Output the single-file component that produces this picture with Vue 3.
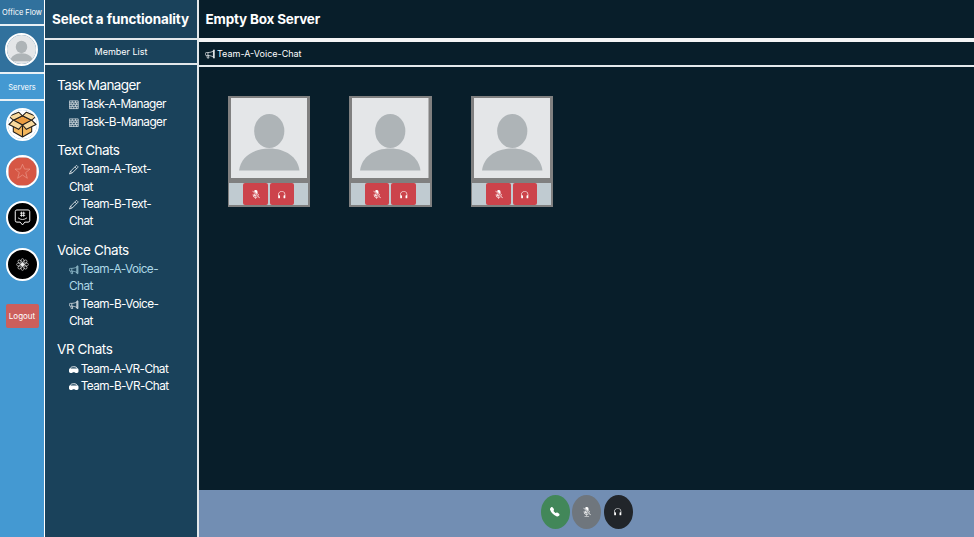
<script setup>
import { h } from 'vue'

const shapes = {
  bricks: [['path', { d: 'M.5 1.500h15v13H.500zM.500 4.750h15M.500 8h15M.500 11.250h15M5.500 1.500v3.250M11 1.500v3.250M3.500 4.750V8M8 4.750V8M12.500 4.750V8M5.500 8v3.250M11 8v3.250M3.500 11.250v3.250M8 11.250v3.250M12.500 11.250v3.250', fill: 'none', stroke: 'currentColor', 'stroke-width': 1.1 }]],
  pencil: [['path', { d: 'M12.2.9a.7.7 0 0 1 1 0l1.9 1.9a.7.7 0 0 1 0 1L5.6 13.3.8 15.2l1.9-4.800zM9.800 3.300l2.900 2.900M2.700 10.400l2.900 2.900', fill: 'none', stroke: 'currentColor', 'stroke-width': 1.25 }]],
  megaphone: [['path', { d: 'M13.500 2.300v11.400M13.500 1.500h1.600v13h-1.600zM13.300 3.200C11 4.900 7.400 5.600 4.500 5.700H2.200C1.200 5.700.6 6.300.6 7v2c0 .8.6 1.300 1.600 1.300h2.300c2.900.1 6.500.8 8.800 2.500M4.700 5.700v4.600M3 10.400l.8 4.100h2.500l-.8-4', fill: 'none', stroke: 'currentColor', 'stroke-width': 1.1 }]],
  vr: [
    ['path', { d: 'M2 6.500C2.300 4 4.800 2.900 8 2.900s5.700 1.100 6 3.600', fill: 'none', stroke: 'currentColor', 'stroke-width': 1.5 }],
    ['path', { d: 'M2 5.800h12a2 2 0 0 1 2 2v3a2.500 2.500 0 0 1-2.500 2.500h-2c-1.500 0-2-1-3.500-1s-2 1-3.500 1h-2A2.500 2.500 0 0 1 0 10.800v-3a2 2 0 0 1 2-2z', fill: 'currentColor' }]
  ],
  mute: [['path', { d: 'M13 8c0 .564-.094 1.107-.266 1.613l-.814-.814A4 4 0 0 0 12 8V7a.5.5 0 0 1 1 0zm-5 4c.818 0 1.578-.245 2.212-.667l.718.719a5 5 0 0 1-2.43.923V15h3a.5.5 0 0 1 0 1h-7a.5.5 0 0 1 0-1h3v-2.025A5 5 0 0 1 3 8V7a.5.5 0 0 1 1 0v1a4 4 0 0 0 4 4m3-9v4.879L5.158 2.037A3.001 3.001 0 0 1 11 3M9.486 10.607 5 6.12V8a3 3 0 0 0 4.486 2.607M2.146 1.854l12 12 .708-.708-12-12z', fill: 'currentColor' }]],
  headphones: [['path', { d: 'M8 3a5 5 0 0 0-5 5v1h1a1 1 0 0 1 1 1v3a1 1 0 0 1-1 1H3a1 1 0 0 1-1-1V8a6 6 0 1 1 12 0v5a1 1 0 0 1-1 1h-1a1 1 0 0 1-1-1v-3a1 1 0 0 1 1-1h1V8a5 5 0 0 0-5-5', fill: 'currentColor' }]],
  phone: [['path', { d: 'M1.885.511a1.745 1.745 0 0 1 2.61.163L6.29 2.98c.329.423.445.974.315 1.494l-.547 2.19a.68.68 0 0 0 .178.643l2.457 2.457a.68.68 0 0 0 .644.178l2.189-.547a1.75 1.75 0 0 1 1.494.315l2.306 1.794c.829.645.905 1.87.163 2.611l-1.034 1.034c-.74.74-1.846 1.065-2.877.702a18.6 18.6 0 0 1-7.01-4.42 18.6 18.6 0 0 1-4.42-7.009c-.362-1.03-.037-2.137.703-2.877z', fill: 'currentColor' }]]
}
const Icon = (props) => h('svg', { viewBox: '0 0 16 16', class: 'icon' }, shapes[props.name].map(([tag, attrs]) => h(tag, attrs)))
Icon.props = ['name']

const Avatar = () => h('svg', { viewBox: '0 0 76 80', preserveAspectRatio: 'none' }, [
  h('rect', { width: 76, height: 80, fill: '#e4e6e8' }),
  h('ellipse', { cx: 38, cy: 33, rx: 15, ry: 17, fill: '#aeb4b7' }),
  h('path', { d: 'M8 72.500C9.500 59 22 50.500 38 50.500S66.500 59 68 72.500z', fill: '#aeb4b7' })
])

const groups = [
  { title: 'Task Manager', icon: 'bricks', items: ['Task-A-Manager', 'Task-B-Manager'] },
  { title: 'Text Chats', icon: 'pencil', items: ['Team-A-Text-Chat', 'Team-B-Text-Chat'] },
  { title: 'Voice Chats', icon: 'megaphone', items: ['Team-A-Voice-Chat', 'Team-B-Voice-Chat'] },
  { title: 'VR Chats', icon: 'vr', items: ['Team-A-VR-Chat', 'Team-B-VR-Chat'] }
]
const current = 'Team-A-Voice-Chat'
const petals = [0, 45, 90, 135, 180, 225, 270, 315]
</script>

<template>
  <div class="app">
    <nav class="rail">
      <div class="brand">Office Flow</div>
      <div class="profile"><div class="disc"><Avatar /></div></div>
      <div class="servers">Servers</div>
      <div class="server-list">
        <div class="disc">
          <svg viewBox="0 0 30 30">
            <rect width="30" height="30" fill="#fff" />
            <g stroke="#25201b" stroke-width="1.100" stroke-linejoin="round">
              <path d="M5.500 10.500 15 6l9.500 4.500v12L15 28l-9.500-5.500z" fill="#f3b65c" />
              <path d="M5.500 10.500 15 6l9.500 4.500L15 15.500z" fill="#eb9c40" />
              <path d="M15 15.500V28" />
              <path d="M5.500 10.500 1 6.500 11 2.300 15 6z" fill="#f8d99d" />
              <path d="M24.500 10.500 29 6.500 19 2.300 15 6z" fill="#f8d99d" />
              <path d="M5.500 10.500 1 15l10 5 4-4.500z" fill="#f8d99d" />
              <path d="M24.500 10.500 29 15l-10 5-4-4.500z" fill="#f8d99d" />
            </g>
          </svg>
        </div>
        <div class="disc">
          <svg viewBox="0 0 30 30">
            <rect width="30" height="30" fill="#fff" />
            <rect x=".5" y=".5" width="29" height="29" rx="11" fill="#d65745" />
            <path d="m15 7.500 2.100 5h5.700l-4.500 3.600 1.700 5.900-5-3.400-5 3.400 1.700-5.900-4.500-3.600h5.700z" fill="none" stroke="#eb9a8c" stroke-width=".7" />
          </svg>
        </div>
        <div class="disc black">
          <svg viewBox="0 0 30 30" fill="none" stroke="#fff" stroke-width="1">
            <path d="M9.200 7.200h11.600q1.700 0 1.700 1.700v9.200q0 1.700-1.700 1.700h-3.400L15 22.700l-2.400-2.900H9.200q-1.700 0-1.700-1.700V8.900q0-1.700 1.700-1.700z" />
            <path d="M14 9v5.200M16.200 9v5.200M12.400 10.500h5.400M12.400 12.800h5.400M10.300 15.300q4.700 3.600 9.400 0" stroke-width=".85" />
          </svg>
        </div>
        <div class="disc black">
          <svg viewBox="0 0 30 30" fill="none" stroke="#fff" stroke-width=".600">
            <ellipse v-for="a in petals" :key="a" cx="15" cy="11.800" rx="1.700" ry="2.900" :transform="`rotate(${a} 15 15)`" />
            <circle cx="15" cy="15" r="1.200" />
          </svg>
        </div>
      </div>
      <button class="logout">Logout</button>
    </nav>

    <aside class="sidebar">
      <h2 class="side-title"><span>Select a functionality</span></h2>
      <div class="members">Member List</div>
      <div class="groups">
        <section v-for="g in groups" :key="g.title" class="group">
          <h3>{{ g.title }}</h3>
          <ul>
            <li v-for="item in g.items" :key="item" :class="{ active: item === current }"><Icon :name="g.icon" />{{ item }}</li>
          </ul>
        </section>
      </div>
    </aside>

    <main class="main">
      <h2 class="main-title">Empty Box Server</h2>
      <div class="channel"><Icon name="megaphone" />{{ current }}</div>
      <div class="stage">
        <div v-for="n in 3" :key="n" class="card">
          <Avatar class="photo" />
          <div class="controls">
            <button><Icon name="mute" /></button>
            <button><Icon name="headphones" /></button>
          </div>
        </div>
      </div>
      <footer class="callbar">
        <button class="call"><Icon name="phone" /></button>
        <button class="mic"><Icon name="mute" /></button>
        <button class="sound"><Icon name="headphones" /></button>
      </footer>
    </main>
  </div>
</template>

<style>
body { margin: 0; overflow: hidden; }
</style>

<style scoped>
* { box-sizing: border-box; }
.app { display: flex; width: 974px; height: 537px; font-family: Inter, "Liberation Sans", sans-serif; color: #fff; background: #081e2a; }
h2, h3, ul { margin: 0; padding: 0; font-weight: 400; list-style: none; }
button { border: 0; padding: 0; color: #fff; font-family: inherit; display: flex; align-items: center; justify-content: center; }

.rail { width: 45px; flex: none; background: #4499d2; border-right: 1px solid #fff; display: flex; flex-direction: column; align-items: center; }
.brand, .profile, .servers { width: 44px; display: flex; align-items: center; justify-content: center; border-bottom: 2px solid #e9f1f6; white-space: nowrap; flex: none; }
.brand { height: 26px; background: #31719d; font-size: 7.500px; letter-spacing: -.05px; }
.profile { height: 48px; background: #31719d; padding-right: .4px; }
.servers { height: 27px; font-size: 7.500px; padding-top: 1px; }
.disc { width: 33px; height: 33px; border: 2px solid #fff; border-radius: 50%; overflow: hidden; flex: none; }
.disc svg { display: block; width: 100%; height: 100%; }
.black { background: #000; }
.server-list { display: flex; flex-direction: column; gap: 13.600px; padding-top: 7px; }
.logout { width: 33px; height: 24px; margin-top: 22.800px; border-radius: 2px; background: #cc5f5c; font-size: 8px; }

.sidebar { width: 154px; flex: none; background: #1a425b; border-right: 2px solid #e3e8eb; }
.side-title { height: 40px; border-bottom: 2px solid #e3e8eb; display: flex; align-items: center; justify-content: center; font-size: 13.500px; font-weight: 700; white-space: nowrap; letter-spacing: -.13px; padding-right: 1px; }
.members { height: 25px; border-bottom: 2px solid #e3e8eb; display: flex; align-items: center; justify-content: center; font-size: 9px; }
.groups { padding: 10px 24px 0 12px; }
.group { margin-bottom: 8.900px; }
.group h3 { font-size: 13.500px; line-height: 20.800px; letter-spacing: -.57px; }
.group:nth-child(n + 3) h3 { letter-spacing: -.4px; }
.group ul { padding: .6px 0 0 12px; }
.group li { font-size: 11.800px; line-height: 17.350px; letter-spacing: -.57px; }
.group li .icon { width: 9.500px; height: 9.500px; margin-right: 2.200px; vertical-align: -1.500px; }
.group .active { color: #add8e6; }

.main { flex: 1; display: flex; flex-direction: column; }
.main-title { height: 42px; flex: none; border-bottom: 4px solid #f3f4f5; padding-left: 6.500px; line-height: 38px; font-size: 13.500px; font-weight: 700; letter-spacing: -.19px; }
.channel { height: 25px; flex: none; border-bottom: 2px solid #e3e8eb; padding-left: 6px; display: flex; align-items: center; gap: 2px; font-size: 9px; }
.channel .icon { width: 10px; height: 10px; margin-top: 1px; }
.stage { flex: 1; display: flex; align-items: flex-start; gap: 39px; padding: 29px 29px 0 28.600px; }
.card { width: 82.500px; height: 111px; background: #808080; padding: 2.300px 2px; display: flex; flex-direction: column; align-items: center; gap: 4.700px; }
.photo { width: 76.500px; height: 80px; flex: none; }
.controls { width: 79px; height: 22px; background: #c0cbd1; display: flex; justify-content: center; gap: 2px; }
.controls button { width: 24.500px; height: 22px; border-radius: 2px; background: #cc434b; }
.controls .icon { width: 9.500px; height: 9.500px; margin-top: 1px; }
.callbar { height: 47px; flex: none; background: #728eb3; display: flex; justify-content: center; align-items: flex-start; gap: 2.500px; padding-top: 4.500px; }
.callbar button { width: 29px; height: 34px; border-radius: 50%; }
.callbar .icon { width: 9.500px; height: 9.500px; margin-top: 1px; }
.call { background: #428759; }
.mic { background: #6f767d; }
.sound { background: #21252a; }
</style>
